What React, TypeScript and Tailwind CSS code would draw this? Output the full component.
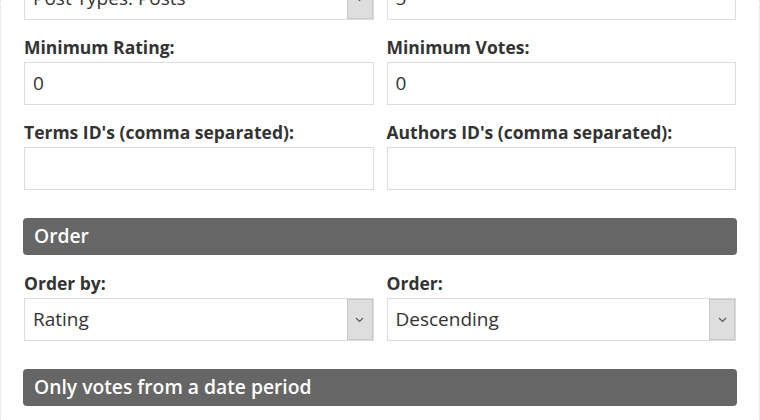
function Chevron() {
  return (
    <svg width="9" height="6" viewBox="0 0 9 6" className="text-[#555]">
      <polyline points="1,1 4.5,4.5 8,1" fill="none" stroke="currentColor" strokeWidth="1.1" />
    </svg>
  );
}

interface FieldProps {
  label: string;
  value?: string;
  select?: boolean;
}

function Field({ label, value = "", select }: FieldProps) {
  return (
    <div className="flex flex-col">
      <label className="mb-[6px] h-[18px] whitespace-nowrap text-[17.5px] font-bold leading-[18px] text-[#333]">
        {label}
      </label>
      <div className="flex h-[43px] items-stretch border border-[#dcdcdc] bg-white">
        <span className="flex flex-1 items-center truncate pl-[8px] text-[19px] text-[#333]">{value}</span>
        {select && (
          <div className="flex w-[26px] items-center justify-center border border-[#c8c8c8] bg-[#dedede]">
            <Chevron />
          </div>
        )}
      </div>
    </div>
  );
}

function SectionHeader({ title }: { title: string }) {
  return (
    <div className="flex h-[37px] items-center rounded-[4px] bg-[#666666] pl-[11px] text-[19.3px] font-semibold text-white">
      {title}
    </div>
  );
}

export default function App() {
  return (
    <div
      className="h-[420px] w-[760px] overflow-hidden border-x border-dotted border-[#dddddd] bg-white"
      style={{ fontFamily: '"Open Sans", "Noto Sans", sans-serif' }}
    >
      <div className="-mt-[47px] px-[22px]">
        <div className="grid grid-cols-2 gap-x-[13px] gap-y-[18px] px-[1px]">
          <Field label="Post Type:" value="Post Types: Posts" select />
          <Field label="Number of Posts:" value="5" />
          <Field label="Minimum Rating:" value="0" />
          <Field label="Minimum Votes:" value="0" />
          <Field label="Terms ID's (comma separated):" />
          <Field label="Authors ID's (comma separated):" />
        </div>

        <div className="mt-[28px]">
          <SectionHeader title="Order" />
        </div>
        <div className="mt-[19px] grid grid-cols-2 gap-x-[13px] px-[1px]">
          <Field label="Order by:" value="Rating" select />
          <Field label="Order:" value="Descending" select />
        </div>

        <div className="mt-[28px]">
          <SectionHeader title="Only votes from a date period" />
        </div>
      </div>
    </div>
  );
}
